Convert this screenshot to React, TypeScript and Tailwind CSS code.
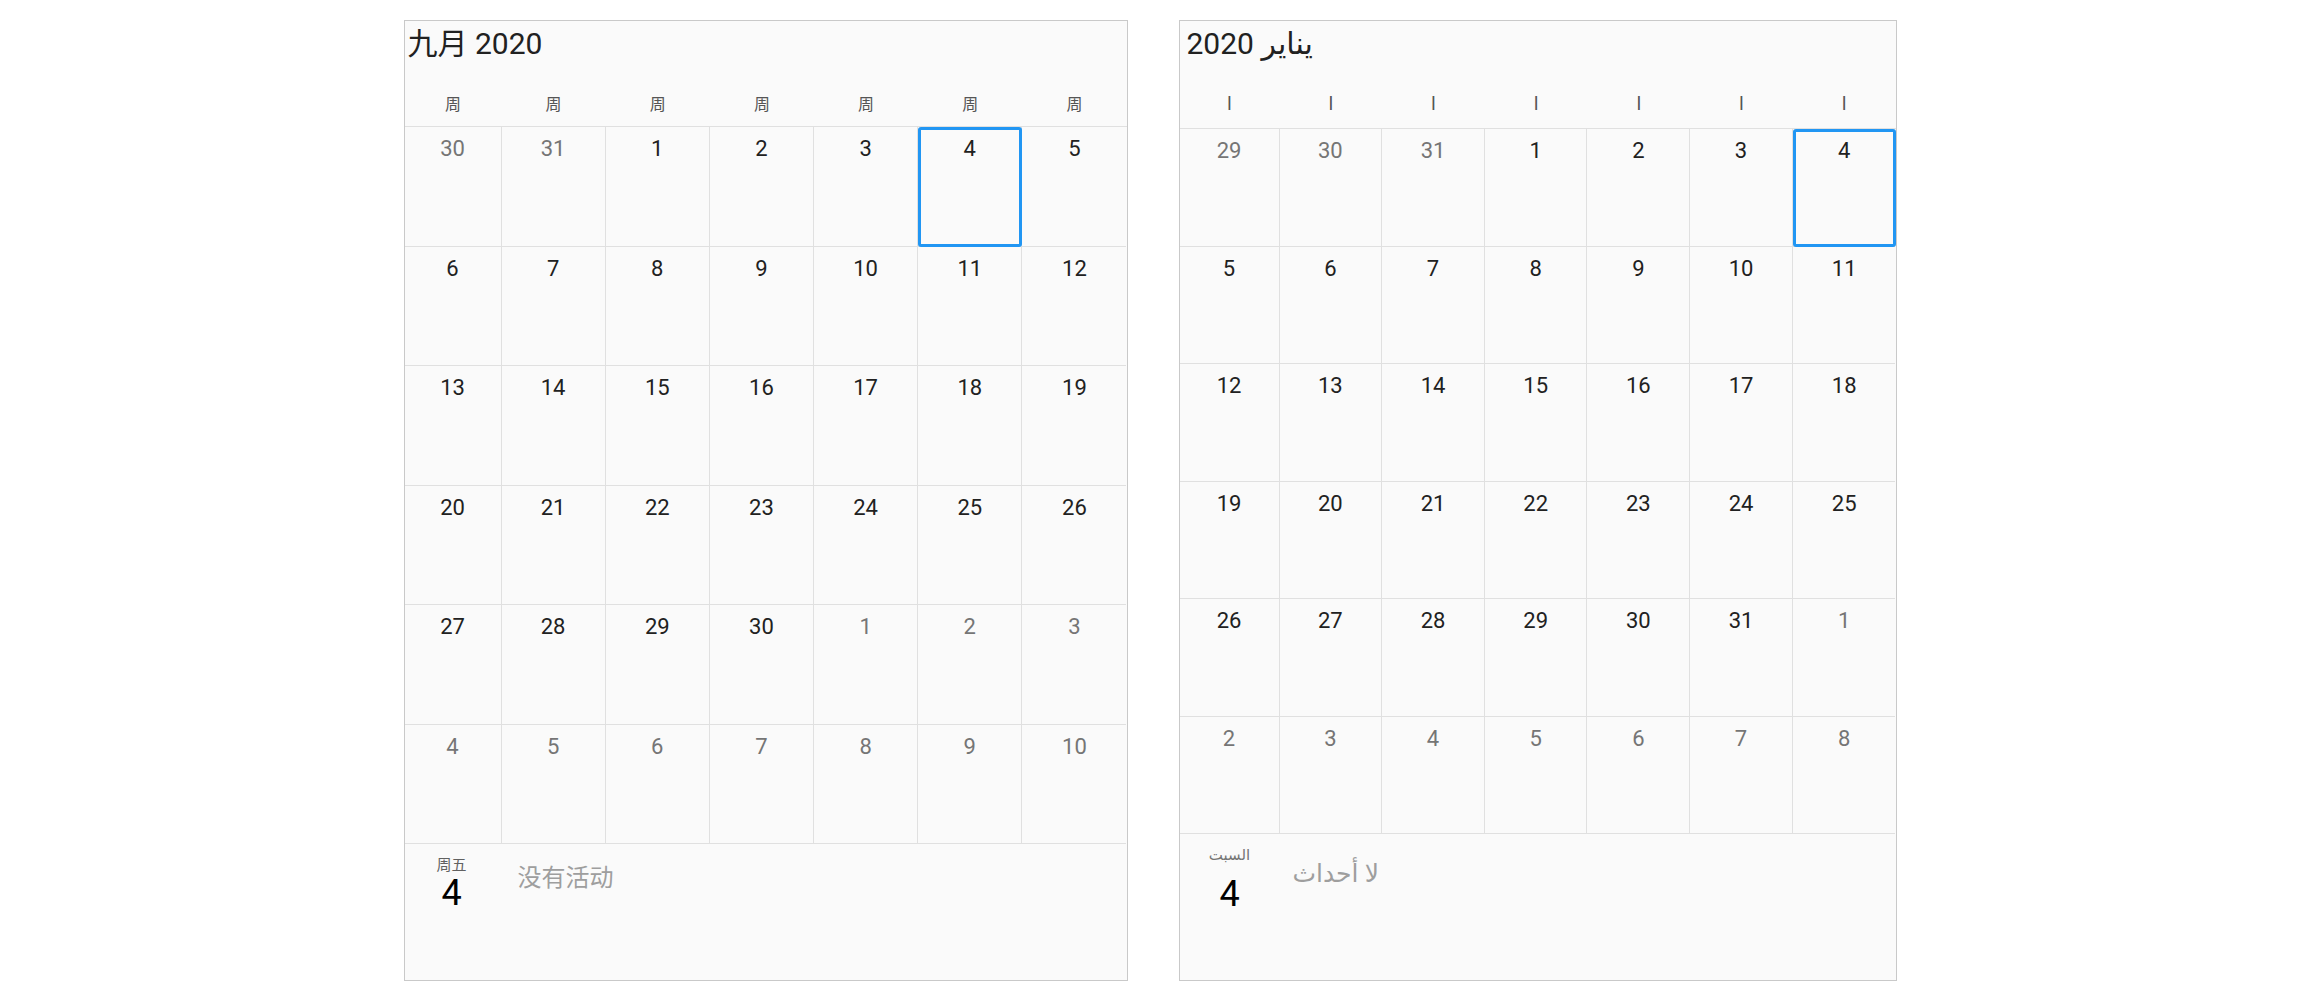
type Day = { n: number; out?: boolean };

const font = { fontFamily: "Roboto, 'Noto Sans CJK SC', 'DejaVu Sans', sans-serif" };

function mk(nums: number[], outIdx: number[] = []): Day[] {
  return nums.map((n, i) => ({ n, out: outIdx.includes(i) }));
}

const septWeeks: Day[][] = [
  mk([30, 31, 1, 2, 3, 4, 5], [0, 1]),
  mk([6, 7, 8, 9, 10, 11, 12]),
  mk([13, 14, 15, 16, 17, 18, 19]),
  mk([20, 21, 22, 23, 24, 25, 26]),
  mk([27, 28, 29, 30, 1, 2, 3], [4, 5, 6]),
  mk([4, 5, 6, 7, 8, 9, 10], [0, 1, 2, 3, 4, 5, 6]),
];

const janWeeks: Day[][] = [
  mk([29, 30, 31, 1, 2, 3, 4], [0, 1, 2]),
  mk([5, 6, 7, 8, 9, 10, 11]),
  mk([12, 13, 14, 15, 16, 17, 18]),
  mk([19, 20, 21, 22, 23, 24, 25]),
  mk([26, 27, 28, 29, 30, 31, 1], [6]),
  mk([2, 3, 4, 5, 6, 7, 8], [0, 1, 2, 3, 4, 5, 6]),
];

function Cells({ weeks, selRow, selCol }: { weeks: Day[][]; selRow: number; selCol: number }) {
  return (
    <>
      {weeks.map((week, r) =>
        week.map((d, c) => (
          <div
            key={`${r}-${c}`}
            className={`relative border-b border-[#e0e0e0] pt-[5px] text-center text-[22px] leading-[33px] ${
              c < 6 ? 'border-r' : ''
            } ${d.out ? 'text-[#757575]' : 'text-[#212121]'}`}
          >
            {d.n}
            {r === selRow && c === selCol && (
              <div className="absolute top-0 left-0 -right-px -bottom-px rounded-[3px] border-[3px] border-[#2196f3]" />
            )}
          </div>
        ))
      )}
    </>
  );
}

function ChineseCalendar() {
  return (
    <div className="flex h-[961px] w-[724px] flex-col border border-[#c9c9c9] bg-[#fafafa]" style={font}>
      <div className="h-[106px] border-b border-[#e0e0e0]">
        <div className="h-[63px] pl-[3px] pt-[5px] text-[30px] leading-[36px] text-[#212121]">九月 2020</div>
        <div className="grid h-[42px] grid-cols-[97px_repeat(6,1fr)] items-center text-center text-[16px] text-[#555]">
          {Array.from({ length: 7 }).map((_, i) => (
            <div key={i}>周</div>
          ))}
        </div>
      </div>
      <div className="grid h-[717px] grid-cols-[97px_repeat(6,1fr)] grid-rows-6">
        <Cells weeks={septWeeks} selRow={0} selCol={5} />
      </div>
      <div className="flex flex-1">
        <div className="flex w-[94px] flex-col items-center pt-[11px]">
          <div className="text-[15px] leading-[20px] text-[#616161]">周五</div>
          <div className="text-[36px] leading-[36px] text-black">4</div>
        </div>
        <div className="pl-[19px] pt-[18px] text-[24px] leading-[32px] text-[#9e9e9e]">没有活动</div>
      </div>
    </div>
  );
}

function ArabicCalendar() {
  return (
    <div className="flex h-[961px] w-[718px] flex-col border border-[#c9c9c9] bg-[#fafafa]" style={font}>
      <div className="h-[108px] border-b border-[#e0e0e0]">
        <div className="h-[60px] pl-[7px] pt-[5px] text-[30px] leading-[36px] text-[#212121]">2020 يناير</div>
        <div className="grid h-[47px] grid-cols-[100px_repeat(6,1fr)] items-center text-center text-[19px] text-[#555]">
          {Array.from({ length: 7 }).map((_, i) => (
            <div key={i}>ا</div>
          ))}
        </div>
      </div>
      <div className="grid h-[705px] grid-cols-[100px_repeat(6,1fr)] grid-rows-6">
        <Cells weeks={janWeeks} selRow={0} selCol={6} />
      </div>
      <div className="flex flex-1">
        <div className="flex w-[100px] flex-col items-center pt-[11px]">
          <div className="text-[15px] leading-[20px] text-[#757575]">السبت</div>
          <div className="mt-[11px] text-[36px] leading-[36px] text-black">4</div>
        </div>
        <div className="pl-[13px] pt-[24px] text-[25px] leading-[32px] text-[#9e9e9e]">لا أحداث</div>
      </div>
    </div>
  );
}

export default function App() {
  return (
    <div className="flex h-[1002px] w-full justify-center gap-[51px] bg-white pt-[20px]">
      <ChineseCalendar />
      <ArabicCalendar />
    </div>
  );
}
